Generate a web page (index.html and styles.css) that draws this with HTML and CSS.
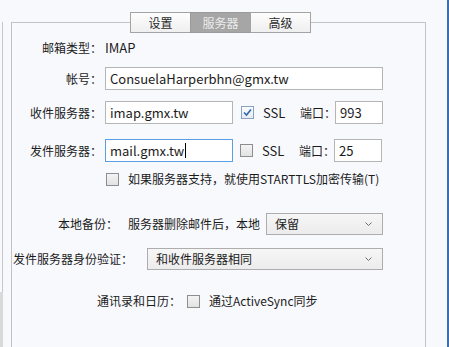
FILE: index.html
```html
<!DOCTYPE html>
<html lang="zh-CN">
<head>
    <meta charset="UTF-8">
    <meta name="viewport" content="width=device-width, initial-scale=1.0">
    <title>服务器设置</title>
    <link rel="stylesheet" href="styles.css">
</head>
<body>
    <div class="side">
        <div class="side-top"></div>
        <div class="side-line"></div>
        <div class="side-fill"></div>
    </div>

    <div class="group">
        <div class="tabs">
            <div class="tab">设置</div>
            <div class="tab active">服务器</div>
            <div class="tab">高级</div>
        </div>

        <div class="row row-type">
            <span class="label">邮箱类型：</span>
            <span class="value">IMAP</span>
        </div>

        <div class="row row-account">
            <span class="label">帐号：</span>
            <div class="input wide">ConsuelaHarperbhn@gmx.tw</div>
        </div>

        <div class="row row-in">
            <span class="label">收件服务器：</span>
            <div class="input host">imap.gmx.tw</div>
            <span class="check checked">
                <svg width="11" height="11" viewBox="0 0 11 11"><path d="M2 5.5 L4.5 8 L9 2.5" fill="none" stroke="#2f66ad" stroke-width="1.6"/></svg>
            </span>
            <span class="ssl">SSL</span>
            <span class="port-label">端口：</span>
            <div class="input port">993</div>
        </div>

        <div class="row row-out">
            <span class="label">发件服务器：</span>
            <div class="input host focus">mail.gmx.tw<span class="caret"></span></div>
            <span class="check"></span>
            <span class="ssl">SSL</span>
            <span class="port-label">端口：</span>
            <div class="input port">25</div>
        </div>

        <div class="row row-tls">
            <span class="check"></span>
            <span class="check-text">如果服务器支持，就使用STARTTLS加密传输(T)</span>
        </div>

        <div class="row row-backup">
            <span>本地备份：</span>
            <span class="note">服务器删除邮件后，本地</span>
            <div class="select small">
                <span>保留</span>
                <svg width="7" height="4" viewBox="0 0 7 4"><path d="M0.5 0.5 L3.5 3.5 L6.5 0.5" fill="none" stroke="#6d6d6d" stroke-width="1"/></svg>
            </div>
        </div>

        <div class="row row-auth">
            <span>发件服务器身份验证：</span>
            <div class="select big">
                <span>和收件服务器相同</span>
                <svg width="7" height="4" viewBox="0 0 7 4"><path d="M0.5 0.5 L3.5 3.5 L6.5 0.5" fill="none" stroke="#6d6d6d" stroke-width="1"/></svg>
            </div>
        </div>

        <div class="row row-sync">
            <span>通讯录和日历：</span>
            <span class="check"></span>
            <span class="check-text">通过ActiveSync同步</span>
        </div>
    </div>

    <div class="filler"></div>
    <div class="edge"></div>
</body>
</html>
```

FILE: styles.css
```css
body {
    margin: 0;
    height: 347px;
    overflow: hidden;
    display: flex;
    background: #f8f9fd;
    font-family: "Noto Sans CJK SC", "Noto Sans", sans-serif;
    font-size: 12px;
    line-height: 16px;
    white-space: nowrap;
    color: #1b1b1b;
}
.side {
    width: 3px;
    flex-shrink: 0;
    display: flex;
    flex-direction: column;
}
.side-top {
    height: 22px;
}
.side-line {
    height: 270px;
    border-right: 1px solid #c6c6c6;
}
.side-fill {
    flex: 1;
    background: #d9d9d9;
}
.group {
    margin: 22px 0 0 8px;
    width: 415px;
    flex-shrink: 0;
    height: 340px;
    border: 1px solid #c3c3c3;
    box-sizing: border-box;
}
.filler {
    flex: 1;
}
.edge {
    width: 2px;
    background: #3a70ae;
}
.tabs {
    display: flex;
    margin: -11px 0 0 118px;
}
.tab {
    width: 61px;
    height: 21px;
    box-sizing: border-box;
    border: 1px solid #a3a3a3;
    background: linear-gradient(#fdfdfd, #efefef);
    color: #2a2a2a;
    display: flex;
    align-items: center;
    justify-content: center;
}
.tab + .tab {
    margin-left: -1px;
}
.tab.active {
    background: #a6a6a6;
    color: #ececec;
    border-color: #9a9a9a;
}
.row {
    display: flex;
    align-items: center;
    padding-right: 42px;
}
.row > * {
    flex-shrink: 0;
}
.label {
    width: 90px;
    text-align: right;
    margin-right: 3px;
}
.value {
    font-size: 13px;
}
.input {
    height: 23px;
    box-sizing: border-box;
    border: 1px solid #b5b5b5;
    background: #ffffff;
    padding: 0 4px;
    font-size: 13px;
    display: flex;
    align-items: center;
}
.row > .input.wide {
    flex: 1;
}
.input.host {
    width: 128px;
}
.input.port {
    width: 48px;
}
.input.focus {
    border-color: #5b9ee2;
}
.caret {
    display: inline-block;
    width: 1px;
    height: 15px;
    background: #000;
    margin-left: 1px;
}
.check {
    width: 13px;
    height: 13px;
    box-sizing: border-box;
    border: 1px solid #8e8e8e;
    background: linear-gradient(#f4f4f4, #e2e2e2);
    display: inline-flex;
    align-items: center;
    justify-content: center;
}
.check.checked {
    border-color: #8aa2c2;
    background: linear-gradient(#fbfcfe, #e6ebf2);
}
.ssl {
    width: 37px;
    margin-left: 9px;
    font-size: 13px;
}
.port-label {
    width: 35px;
}
.row-in .check {
    margin-left: 8px;
}
.row-out .check {
    margin-left: 7px;
}
.check-text {
    margin-left: 9px;
}
.note {
    margin-left: 10px;
}
.select {
    height: 22px;
    box-sizing: border-box;
    border: 1px solid #adadad;
    background: linear-gradient(#f6f6f6, #ececec);
    display: flex;
    align-items: center;
    justify-content: space-between;
    padding: 0 10px 0 8px;
}
.select.small {
    width: 117px;
    margin-left: auto;
}
.row > .select.big {
    flex: 1;
    margin-left: 14px;
}
.row-type {
    margin-top: 3px;
    height: 24px;
}
.row-account {
    margin-top: 7px;
}
.row-in {
    margin-top: 11px;
}
.row-out {
    margin-top: 15px;
}
.row-tls {
    margin-top: 9px;
    height: 16px;
    padding-left: 94px;
}
.row-backup {
    margin-top: 26px;
    padding-left: 46px;
}
.row-auth {
    margin-top: 13px;
    padding-left: 1px;
}
.row-sync {
    margin-top: 23px;
    height: 16px;
    padding-left: 85px;
}
.row-sync .check {
    margin-left: 6px;
}
```
